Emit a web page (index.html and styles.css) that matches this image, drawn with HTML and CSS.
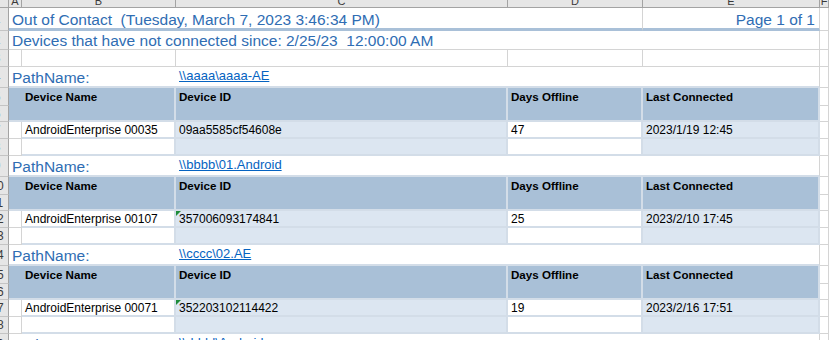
FILE: index.html
```html
<!DOCTYPE html>
<html>
<head>
<meta charset="utf-8">
<link rel="stylesheet" href="styles.css">
</head>
<body>
<div class="sheet">
  <div class="corner"></div>
  <div class="hd"><span>A</span></div>
  <div class="hd"><span>B</span></div>
  <div class="hd"><span>C</span></div>
  <div class="hd"><span>D</span></div>
  <div class="hd"><span>E</span></div>
  <div class="hd"><span>F</span></div>

  <div class="rn"><span>1</span></div>
  <div class="c title">Out of Contact  (Tuesday, March 7, 2023 3:46:34 PM)</div>
  <div class="c page">Page 1 of 1</div>
  <div class="c"></div>

  <div class="rn"><span>2</span></div>
  <div class="c sub">Devices that have not connected since: 2/25/23  12:00:00 AM</div>
  <div class="c"></div>

  <div class="rn"><span>3</span></div>
  <div class="c"></div><div class="c"></div><div class="c"></div><div class="c"></div><div class="c"></div><div class="c"></div>

  <!-- section 1 -->
  <div class="rn"><span>4</span></div>
  <div class="c pn">PathName:</div>
  <div class="c lnk"><a href="#">\\aaaa\aaaa-AE</a></div>
  <div class="c"></div>

  <div class="rn"><span>5</span></div>
  <div class="th tha"></div>
  <div class="th">Device Name</div>
  <div class="th">Device ID</div>
  <div class="th">Days Offline</div>
  <div class="th">Last Connected</div>
  <div class="c"></div>
  <div class="rn"><span>6</span></div>
  <div class="c"></div>

  <div class="rn"><span>7</span></div>
  <div class="c"></div>
  <div class="td">AndroidEnterprise 00035</div>
  <div class="td alt">09aa5585cf54608e</div>
  <div class="td">47</div>
  <div class="td alt">2023/1/19 12:45</div>
  <div class="c"></div>

  <div class="rn"><span>8</span></div>
  <div class="c"></div>
  <div class="td"></div>
  <div class="td alt"></div>
  <div class="td"></div>
  <div class="td alt"></div>
  <div class="c"></div>

  <!-- section 2 -->
  <div class="rn"><span>9</span></div>
  <div class="c pn">PathName:</div>
  <div class="c lnk"><a href="#">\\bbbb\01.Android</a></div>
  <div class="c"></div>

  <div class="rn"><span>10</span></div>
  <div class="th tha"></div>
  <div class="th">Device Name</div>
  <div class="th">Device ID</div>
  <div class="th">Days Offline</div>
  <div class="th">Last Connected</div>
  <div class="c"></div>
  <div class="rn"><span>11</span></div>
  <div class="c"></div>

  <div class="rn"><span>12</span></div>
  <div class="c"></div>
  <div class="td">AndroidEnterprise 00107</div>
  <div class="td alt flag">357006093174841</div>
  <div class="td">25</div>
  <div class="td alt">2023/2/10 17:45</div>
  <div class="c"></div>

  <div class="rn"><span>13</span></div>
  <div class="c"></div>
  <div class="td"></div>
  <div class="td alt"></div>
  <div class="td"></div>
  <div class="td alt"></div>
  <div class="c"></div>

  <!-- section 3 -->
  <div class="rn"><span>14</span></div>
  <div class="c pn">PathName:</div>
  <div class="c lnk"><a href="#">\\cccc\02.AE</a></div>
  <div class="c"></div>

  <div class="rn"><span>15</span></div>
  <div class="th tha"></div>
  <div class="th">Device Name</div>
  <div class="th">Device ID</div>
  <div class="th">Days Offline</div>
  <div class="th">Last Connected</div>
  <div class="c"></div>
  <div class="rn"><span>16</span></div>
  <div class="c"></div>

  <div class="rn"><span>17</span></div>
  <div class="c"></div>
  <div class="td">AndroidEnterprise 00071</div>
  <div class="td alt flag">352203102114422</div>
  <div class="td">19</div>
  <div class="td alt">2023/2/16 17:51</div>
  <div class="c"></div>

  <div class="rn"><span>18</span></div>
  <div class="c"></div>
  <div class="td"></div>
  <div class="td alt"></div>
  <div class="td"></div>
  <div class="td alt"></div>
  <div class="c"></div>

  <!-- section 4 (cut off) -->
  <div class="rn"><span>19</span></div>
  <div class="c pn">PathName:</div>
  <div class="c lnk"><a href="#">\\dddd\Android</a></div>
  <div class="c"></div>
</div>
</body>
</html>
```

FILE: styles.css
```css
html, body {
  margin: 0;
  padding: 0;
  background: #ffffff;
  overflow: hidden;
}

body {
  font-family: "Liberation Sans", Arial, sans-serif;
  width: 829px;
  height: 340px;
}

.sheet {
  display: grid;
  grid-template-columns: 9px 13px 154px 332px 135px 177px 9px;
  grid-template-rows:
    8px 23px 19px 17px
    21px 18px 16px 17px 17px
    21px 18px 16px 17px 17px
    21px 18px 16px 17px 17px
    21px;
  width: 829px;
}

.sheet > div {
  box-sizing: border-box;
  min-width: 0;
  overflow: hidden;
  white-space: pre;
}

.corner {
  background: #e6e6e6;
  border-right: 1px solid #a3a3a3;
  border-bottom: 1px solid #a3a3a3;
}

.hd {
  background: #e6e6e6;
  border-right: 1px solid #a3a3a3;
  border-bottom: 1px solid #a3a3a3;
  text-align: center;
  color: #3a3a3a;
  font-size: 11px;
}

.hd span {
  display: block;
  line-height: 14px;
  margin-top: -6px;
}

.rn {
  background: #e6e6e6;
  border-right: 1px solid #a3a3a3;
  border-bottom: 1px solid #c4c4c4;
  display: flex;
  align-items: center;
  color: #3a3a3a;
  font-size: 12px;
}

.rn span {
  display: block;
  flex: none;
  width: 20px;
  margin-left: -13px;
  text-align: center;
  line-height: 14px;
}

.c {
  border-right: 1px solid #d4d4d4;
  border-bottom: 1px solid #d4d4d4;
}

.title {
  grid-column: span 4;
  border-bottom: 3px solid #a9c0d8;
  color: #2f6db3;
  font-size: 15.5px;
  line-height: 18px;
  padding: 3px 0 0 3px;
}

.page {
  border-bottom: 3px solid #a9c0d8;
  color: #2f6db3;
  font-size: 15.5px;
  line-height: 18px;
  padding: 3px 4px 0 0;
  text-align: right;
}

.sub {
  grid-column: span 5;
  color: #2f6db3;
  font-size: 15.5px;
  line-height: 18px;
  padding: 1px 0 0 3px;
}

.pn {
  grid-column: span 2;
  border-right: none;
  border-bottom: 2px solid #d3dde8;
  color: #2f6db3;
  font-size: 15.5px;
  line-height: 18px;
  padding: 2px 0 0 3px;
}

.lnk {
  grid-column: span 3;
  border-bottom: 2px solid #d3dde8;
  font-size: 13px;
  line-height: 15px;
  padding: 1px 0 0 3px;
}

.lnk a {
  color: #0563c1;
  text-decoration: underline;
}

.th {
  grid-row: span 2;
  background: #a9c0d7;
  border-right: 2px solid #d3dde8;
  border-bottom: 2px solid #d3dde8;
  color: #000000;
  font-weight: bold;
  font-size: 11.6px;
  line-height: 14px;
  padding: 2px 0 0 3px;
}

.tha {
  border-right: none;
}

.td {
  background: #ffffff;
  border-right: 2px solid #d3dde8;
  border-bottom: 2px solid #d3dde8;
  color: #000000;
  font-size: 12px;
  line-height: 14px;
  padding: 0 0 0 3px;
  display: flex;
  align-items: flex-end;
}

.alt {
  background: #dce6f1;
}

.flag {
  position: relative;
}

.flag::before {
  content: "";
  position: absolute;
  top: 0;
  left: 0;
  width: 0;
  height: 0;
  border-top: 5px solid #1e8c3a;
  border-right: 5px solid transparent;
}
```
